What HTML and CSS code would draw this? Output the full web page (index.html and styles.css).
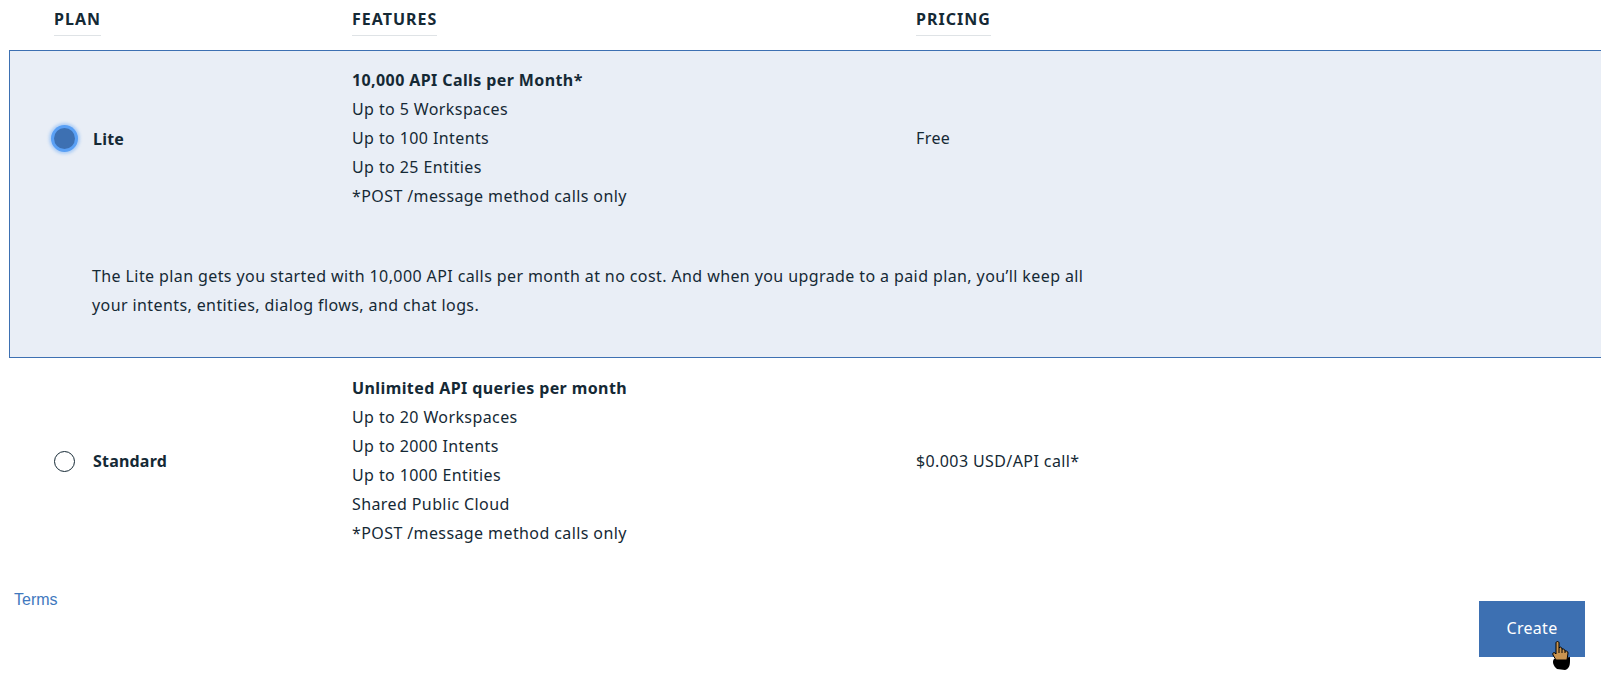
FILE: index.html
```html
<!DOCTYPE html>
<html lang="en">
<head>
<meta charset="utf-8">
<title>Plans</title>
<link rel="stylesheet" href="styles.css">
</head>
<body>
<div class="page">
  <div class="head-row">
    <div class="head-cell"><span class="head-label">PLAN</span></div>
    <div class="head-cell"><span class="head-label">FEATURES</span></div>
    <div class="head-cell"><span class="head-label">PRICING</span></div>
  </div>

  <div class="plan plan-selected">
    <div class="plan-main">
      <div class="plan-name">
        <span class="radio radio-on"></span>
        <span class="plan-title">Lite</span>
      </div>
      <ul class="features">
        <li class="feature-lead">10,000 API Calls per Month*</li>
        <li>Up to 5 Workspaces</li>
        <li>Up to 100 Intents</li>
        <li>Up to 25 Entities</li>
        <li>*POST /message method calls only</li>
      </ul>
      <div class="price">Free</div>
    </div>
    <p class="plan-desc">The Lite plan gets you started with 10,000 API calls per month at no cost. And when you upgrade to a paid plan, you’ll keep all<br>your intents, entities, dialog flows, and chat logs.</p>
  </div>

  <div class="plan">
    <div class="plan-main">
      <div class="plan-name">
        <span class="radio"></span>
        <span class="plan-title">Standard</span>
      </div>
      <ul class="features">
        <li class="feature-lead">Unlimited API queries per month</li>
        <li>Up to 20 Workspaces</li>
        <li>Up to 2000 Intents</li>
        <li>Up to 1000 Entities</li>
        <li>Shared Public Cloud</li>
        <li>*POST /message method calls only</li>
      </ul>
      <div class="price">$0.003 USD/API call*</div>
    </div>
  </div>

  <div class="footer">
    <a class="terms" href="#">Terms</a>
    <button class="create" type="button">Create</button>
  </div>

  <svg class="cursor" width="22" height="30" viewBox="0 0 22 30" aria-hidden="true">
    <path d="M3 18 C1 20 2 25 6 28 L14 29 C18 28 19 24 19 20 L19 16 Z" fill="#000"/>
    <path d="M5 2 L5 13 L4 12 C3 11 1 12 2 14 L5 19 L16 19 L17 12 C17 10 15 10 15 10 L14 10 C14 8 12 8 12 8 L11 8 C11 6 9 6 9 6 L8 7 L8 2 C8 0 5 0 5 2 Z" fill="#c99450" stroke="#000" stroke-width="1"/>
    <path d="M8 7 L8 12 M11 8 L11 12 M14 10 L14 12" stroke="#000" stroke-width="1" fill="none"/>
  </svg>
</div>
</body>
</html>
```

FILE: styles.css
```css
html, body {
  margin: 0;
  padding: 0;
  background: #ffffff;
}

body {
  font-family: "Noto Sans", "Open Sans", sans-serif;
  font-size: 16px;
  letter-spacing: 0.4px;
  color: #152935;
  overflow: hidden;
}

.page {
  position: relative;
  width: 1601px;
  height: 677px;
  overflow: hidden;
}

.head-row {
  display: grid;
  grid-template-columns: 298px 564px 1fr;
  padding: 6px 0 0 54px;
  height: 50px;
  box-sizing: border-box;
}

.head-label {
  display: inline-block;
  font-weight: 700;
  font-size: 16px;
  line-height: 26px;
  padding-bottom: 3px;
  border-bottom: 1px solid #dfe3e6;
  letter-spacing: 1px;
}

.plan {
  margin-left: 9px;
  margin-right: -20px;
  border: 1px solid transparent;
}

.plan-selected {
  background: #e9eef6;
  border-color: #3d70b2;
  padding-bottom: 37px;
}

.plan-main {
  display: grid;
  grid-template-columns: 298px 564px 1fr;
  align-items: center;
  padding: 15px 0 14px 44px;
}

.plan-name {
  display: flex;
  align-items: center;
  gap: 18px;
}

.plan-title {
  font-weight: 700;
  letter-spacing: 0.2px;
}

.radio {
  display: inline-block;
  width: 21px;
  height: 21px;
  border: 1px solid #152935;
  border-radius: 50%;
  box-sizing: border-box;
  background: #fff;
  flex: none;
}

.radio-on {
  background: #3d70b2;
  border: none;
  box-shadow: 0 0 0 3px #5aa0f5, 0 0 3px 5px rgba(90, 160, 245, 0.4);
}

.features {
  list-style: none;
  margin: 0;
  padding: 0;
  line-height: 29px;
}

.feature-lead {
  font-weight: 700;
}

.price {
  line-height: 29px;
}

.plan-desc {
  margin: 37px 0 0 82px;
  line-height: 29px;
}

.footer {
  display: flex;
  justify-content: space-between;
  align-items: flex-start;
  padding: 28px 16px 0 14px;
}

.terms {
  font-family: "Liberation Sans", Arial, sans-serif;
  font-size: 16px;
  letter-spacing: 0;
  color: #4178be;
  text-decoration: none;
  line-height: 18px;
}

.create {
  margin-top: 10px;
  width: 106px;
  height: 56px;
  background: #3d70b2;
  border: none;
  color: #ffffff;
  font-family: "Noto Sans", "Open Sans", sans-serif;
  font-size: 16px;
  letter-spacing: 0.3px;
  padding: 0 0 3px 0;
}

.cursor {
  position: absolute;
  left: 1551px;
  top: 641px;
}
```
